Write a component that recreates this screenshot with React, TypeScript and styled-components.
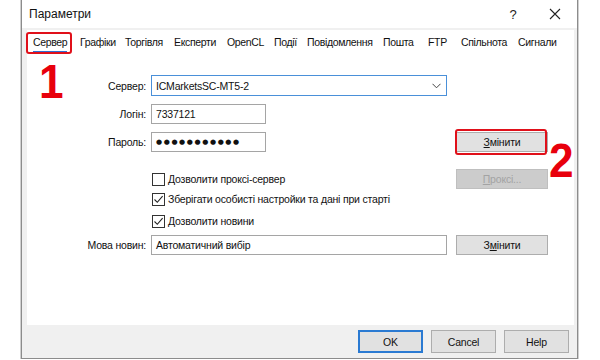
import styled, { createGlobalStyle } from 'styled-components';

const GlobalStyle = createGlobalStyle`
  html, body {
    margin: 0;
    padding: 0;
    background: #fff;
  }
  body {
    font-family: 'Liberation Sans', Arial, sans-serif;
    font-size: 10.5px;
    letter-spacing: -0.2px;
    color: #000;
  }
`;

const tabs = [
  { label: 'Сервер', w: 47, active: true },
  { label: 'Графіки', w: 45 },
  { label: 'Торгівля', w: 49 },
  { label: 'Експерти', w: 53 },
  { label: 'OpenCL', w: 47 },
  { label: 'Події', w: 33 },
  { label: 'Повідомлення', w: 76 },
  { label: 'Пошта', w: 45 },
  { label: 'FTP', w: 33 },
  { label: 'Спільнота', w: 57 },
  { label: 'Сигнали', w: 50 },
];

export default function App() {
  return (
    <>
      <GlobalStyle />
      <Stage>
        <Window>
          <TitleBar>
            <Title>Параметри</Title>
            <TitleButtons>
              <HelpGlyph>?</HelpGlyph>
              <CloseGlyph>
                <svg width="12" height="12" viewBox="0 0 12 12">
                  <path d="M1 1 L11 11 M11 1 L1 11" stroke="#222" strokeWidth="1.1" />
                </svg>
              </CloseGlyph>
            </TitleButtons>
          </TitleBar>

          <Client>
            <TabPanel>
              <TabBar>
                {tabs.map((t) => (
                  <Tab key={t.label} $w={t.w}>
                    <TabText $active={!!t.active}>{t.label}</TabText>
                  </Tab>
                ))}
              </TabBar>

              <Form>
                <FormRow $top={0} $h={21}>
                  <Label>Сервер:</Label>
                  <Combo>
                    <span>ICMarketsSC-MT5-2</span>
                    <svg width="9" height="6" viewBox="0 0 9 6">
                      <path d="M0.5 0.8 L4.5 4.8 L8.5 0.8" fill="none" stroke="#444" strokeWidth="1" />
                    </svg>
                  </Combo>
                </FormRow>

                <FormRow $top={8} $h={20}>
                  <Label>Логін:</Label>
                  <TextField $w={115}>7337121</TextField>
                </FormRow>

                <FormRow $top={8} $h={20}>
                  <Label>Пароль:</Label>
                  <TextField $w={115}>
                    <Dots>●●●●●●●●●●●</Dots>
                  </TextField>
                  <ActionButton>
                    <u>З</u>мінити
                  </ActionButton>
                </FormRow>

                <FormRow $top={17} $h={19}>
                  <Check checked={false} label="Дозволити проксі-сервер" />
                  <ActionButton disabled>
                    <u>П</u>роксі...
                  </ActionButton>
                </FormRow>

                <FormRow $top={2} $h={18}>
                  <Check checked label="Зберігати особисті настройки та дані при старті" />
                </FormRow>

                <FormRow $top={4} $h={18}>
                  <Check checked label="Дозволити новини" />
                </FormRow>

                <FormRow $top={5} $h={20}>
                  <Label>Мова новин:</Label>
                  <TextField $w={296}>Автоматичний вибір</TextField>
                  <ActionButton>
                    З<u>м</u>інити
                  </ActionButton>
                </FormRow>
              </Form>
            </TabPanel>

            <Footer>
              <DialogButton $primary>OK</DialogButton>
              <DialogButton>Cancel</DialogButton>
              <DialogButton>Help</DialogButton>
            </Footer>
          </Client>
        </Window>

        <Marker $x={26} $y={32} $w={46} $h={22} />
        <Marker $x={455} $y={129} $w={92} $h={26} />
        <Callout $x={39} $y={58}>1</Callout>
        <Callout $x={549} $y={137}>2</Callout>
      </Stage>
    </>
  );
}

const Check = ({ checked, label }: { checked: boolean; label: string }) => (
  <CheckLayout>
    <CheckBox>
      {checked && (
        <svg width="11" height="11" viewBox="0 0 11 11">
          <path d="M1.5 5.5 L4.3 8.3 L9.6 2.2" fill="none" stroke="#222" strokeWidth="1.1" />
        </svg>
      )}
    </CheckBox>
    <span>{label}</span>
  </CheckLayout>
);

const Stage = styled.div`
  position: relative;
  width: 600px;
  height: 360px;
  overflow: hidden;
`;

const Window = styled.div`
  display: flex;
  flex-direction: column;
  margin-left: 21px;
  width: 557px;
  height: 359px;
  box-sizing: border-box;
  border: 1px solid #8c8c8c;
  border-top: none;
  background: #fff;
  box-shadow: -1px 0 0 #d0d0d0, 1px 0 0 #d0d0d0;
`;

const TitleBar = styled.div`
  display: flex;
  align-items: center;
  justify-content: space-between;
  height: 28px;
  padding: 0 0 0 7px;
  background: #fff;
`;

const Title = styled.div`
  font-size: 12px;
  letter-spacing: 0;
  color: #111;
`;

const TitleButtons = styled.div`
  display: flex;
  align-items: center;
  height: 100%;
`;

const HelpGlyph = styled.div`
  width: 40px;
  text-align: center;
  font-size: 13px;
  color: #222;
`;

const CloseGlyph = styled.div`
  display: flex;
  align-items: center;
  justify-content: center;
  width: 44px;
  height: 100%;
`;

const Client = styled.div`
  display: flex;
  flex-direction: column;
  flex: 1;
  background: #f0f0f0;
  padding: 2px 3px 0 5px;
`;

const TabPanel = styled.div`
  display: flex;
  flex-direction: column;
  height: 295px;
  background: #fff;
`;

const TabBar = styled.div`
  display: flex;
  padding: 3px 0 0 6px;
`;

const Tab = styled.div<{ $w: number }>`
  width: ${({ $w }) => $w}px;
  height: 20px;
  flex: none;
`;

const TabText = styled.span<{ $active: boolean }>`
  display: inline-block;
  height: 18px;
  line-height: 18px;
  letter-spacing: -0.35px;
  color: #111;
  border-bottom: 2px solid ${({ $active }) => ($active ? '#2f6fd0' : 'transparent')};
`;

const Form = styled.div`
  display: flex;
  flex-direction: column;
  margin-top: 22px;
`;

const FormRow = styled.div<{ $top: number; $h: number }>`
  display: grid;
  grid-template-columns: 124px 296px 9px 92px;
  align-items: center;
  margin-top: ${({ $top }) => $top}px;
  height: ${({ $h }) => $h}px;
`;

const Label = styled.div`
  grid-column: 1;
  text-align: right;
  padding-right: 5px;
  color: #111;
`;

const FieldBase = styled.div`
  grid-column: 2;
  display: flex;
  align-items: center;
  height: 100%;
  box-sizing: border-box;
  padding: 0 4px;
  background: #fff;
  color: #111;
  white-space: nowrap;
`;

const Combo = styled(FieldBase)`
  justify-content: space-between;
  border: 1px solid #4a90d9;
  padding-right: 5px;
`;

const TextField = styled(FieldBase)<{ $w: number }>`
  width: ${({ $w }) => $w}px;
  border: 1px solid #a5a5a5;
`;

const Dots = styled.span`
  font-family: 'DejaVu Sans', sans-serif;
  font-size: 7px;
  letter-spacing: 1.6px;
`;

const ActionButton = styled.button`
  grid-column: 4;
  height: 20px;
  padding: 0;
  font-family: inherit;
  font-size: 10.5px;
  letter-spacing: -0.2px;
  color: #111;
  background: #e1e1e1;
  border: 1px solid #adadad;
  border-radius: 0;

  &:disabled {
    color: #a3a3a3;
    background: #cccccc;
    border-color: #bfbfbf;
  }
`;

const CheckLayout = styled.div`
  grid-column: 2 / 4;
  display: flex;
  align-items: center;
  gap: 3px;
  padding-left: 1px;
  color: #111;
  white-space: nowrap;
`;

const CheckBox = styled.div`
  display: flex;
  align-items: center;
  justify-content: center;
  width: 13px;
  height: 13px;
  box-sizing: border-box;
  border: 1px solid #333;
  background: #fff;
`;

const Footer = styled.div`
  display: flex;
  justify-content: flex-end;
  gap: 8px;
  padding: 5px 5px 0 0;
  height: 33px;
  box-sizing: border-box;
`;

const DialogButton = styled.button<{ $primary?: boolean }>`
  width: 65px;
  height: 23px;
  padding: 0;
  font-family: inherit;
  font-size: 10.5px;
  letter-spacing: -0.2px;
  color: #111;
  background: #e1e1e1;
  border: ${({ $primary }) => ($primary ? '2px solid #2a7ad2' : '1px solid #adadad')};
  border-radius: 0;
`;

const Marker = styled.div<{ $x: number; $y: number; $w: number; $h: number }>`
  position: absolute;
  left: ${({ $x }) => $x}px;
  top: ${({ $y }) => $y}px;
  width: ${({ $w }) => $w}px;
  height: ${({ $h }) => $h}px;
  box-sizing: border-box;
  border: 2px solid #e0101a;
  border-radius: 3px;
`;

const Callout = styled.div<{ $x: number; $y: number }>`
  position: absolute;
  left: ${({ $x }) => $x}px;
  top: ${({ $y }) => $y}px;
  font-family: 'Liberation Sans', Arial, sans-serif;
  font-weight: bold;
  font-size: 48px;
  line-height: 48px;
  letter-spacing: 0;
  color: #e8000c;
  transform: scaleX(0.92);
  transform-origin: left top;
`;
